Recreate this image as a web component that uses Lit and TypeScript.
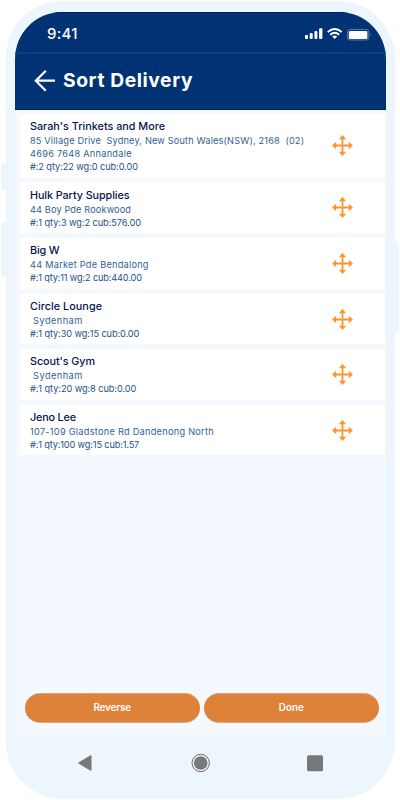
import { LitElement, html, css, svg } from 'lit';
import { customElement, property } from 'lit/decorators.js';

// A single line of text whose tracking is set so that it fills a given width.
@customElement('fit-text')
class FitText extends LitElement {
  @property({ type: Number }) width = 0;
  @property() text = '';
  static styles = css`
    :host { display: block; white-space: pre; }
    span { display: inline-block; white-space: pre; }
  `;
  render() {
    return html`<span>${this.text}</span>`;
  }
  updated() {
    const el = this.renderRoot.querySelector('span') as HTMLElement;
    el.style.letterSpacing = '0px';
    const natural = el.getBoundingClientRect().width;
    const gap = (this.width - natural) / Math.max(1, this.text.length - 1);
    el.style.letterSpacing = `${gap}px`;
  }
}

interface Line { t: string; w: number }
interface Stop { name: Line; address: Line[]; info: Line }

const stops: Stop[] = [
  {
    name: { t: "Sarah's Trinkets and More", w: 135 },
    address: [
      { t: '85 Village Drive  Sydney, New South Wales(NSW), 2168  (02)', w: 274 },
      { t: '4696 7648 Annandale', w: 101.5 },
    ],
    info: { t: '#:2 qty:22 wg:0 cub:0.00', w: 108 },
  },
  {
    name: { t: 'Hulk Party Supplies', w: 99.5 },
    address: [{ t: '44 Boy Pde Rookwood', w: 101 }],
    info: { t: '#:1 qty:3 wg:2 cub:576.00', w: 111 },
  },
  {
    name: { t: 'Big W', w: 29.5 },
    address: [{ t: '44 Market Pde Bendalong', w: 118.5 }],
    info: { t: '#:1 qty:11 wg:2 cub:440.00', w: 112 },
  },
  {
    name: { t: 'Circle Lounge', w: 72 },
    address: [{ t: ' Sydenham', w: 52.3 }],
    info: { t: '#:1 qty:30 wg:15 cub:0.00', w: 109.3 },
  },
  {
    name: { t: "Scout's Gym", w: 65 },
    address: [{ t: ' Sydenham', w: 52.3 }],
    info: { t: '#:1 qty:20 wg:8 cub:0.00', w: 106.3 },
  },
  {
    name: { t: 'Jeno Lee', w: 46 },
    address: [{ t: '107-109 Gladstone Rd Dandenong North', w: 183.7 }],
    info: { t: '#:1 qty:100 wg:15 cub:1.57', w: 109.3 },
  },
];

const arrowHead = svg`<path d="M10.5 0 L14.2 4.2 H11.4 V10.5 H9.6 V4.2 H6.8 Z"/>`;

@customElement('app-root')
class AppRoot extends LitElement {
  static styles = css`
    :host {
      display: block; position: relative; width: 400px; height: 800px;
      overflow: hidden; background: #fff;
      font-family: Inter, "Liberation Sans", sans-serif;
    }
    * { box-sizing: border-box; }
    .side { position: absolute; background: #eef6fd; }
    .mute { left: 1px; top: 163px; width: 7px; height: 27px; border-radius: 3px 0 0 3px; }
    .volume { left: 1px; top: 222px; width: 7px; height: 55px; border-radius: 3px 0 0 3px; }
    .power { left: 394px; top: 241px; width: 5px; height: 92px; border-radius: 0 3px 3px 0; }
    .phone {
      width: 389px; height: 799px; margin-left: 6px;
      border-radius: 57px; background: #eef6fd; padding: 12px 9px 0;
      border-top: 1px solid #fff; display: flex; flex-direction: column; padding-top: 11px;
    }
    .screen {
      height: 724px; width: 371px; background: #f4f9ff; overflow: hidden;
      border-radius: 47px 47px 0 0; display: flex; flex-direction: column; flex: none;
    }
    .status {
      height: 42px; background: #003274; border-top: 1px solid #00205f;
      border-bottom: 2px solid #113d7c; flex: none; display: flex;
      justify-content: space-between; padding: 12px 14px 0 32px;
    }
    .clock { color: #fff; font-size: 15px; font-weight: 500; line-height: 17px; }
    .icons { margin-top: 2px; flex: none; }
    .bar {
      height: 56px; background: #003274; border-bottom: 1px solid #00205f;
      display: flex; align-items: flex-start; padding: 14px 0 0 19px; flex: none;
    }
    .title { color: #fff; font-weight: 700; font-size: 19.3px; line-height: 26px; margin: -1px 0 0 7px; }
    .list { padding: 4px 1px 0 5px; display: flex; flex-direction: column; gap: 4.9px; }
    .card {
      background: #fff; height: 50.7px; padding: 6.2px 31px 0 10px; display: flex;
      justify-content: space-between; flex: none;
    }
    .card.tall { height: 63.6px; padding-top: 6px; }
    .text { width: 280px; flex: none; }
    .name { color: #06164f; font-size: 10.8px; font-weight: 500; line-height: 14px; }
    .line { color: #325f96; font-size: 9.2px; line-height: 13px; }
    .info { color: #1d4f8b; }
    .move { align-self: center; margin: -6px 1px 0 0; flex: none; fill: #fd9430; }
    .buttons { margin-top: auto; padding: 0 7px 13px 9.5px; display: flex; gap: 4px; }
    .btn {
      width: 175.3px; height: 30px; border-radius: 15px; background: #de8139;
      border: 0; border-top: 1px solid #e3a376; border-bottom: 1px solid #e0a67c; padding: 0;
      color: #fff; font: 600 9.8px/28px Inter, sans-serif;
      display: flex; justify-content: center;
    }
    .nav { flex: none; margin-left: 62px; margin-top: 16px; }
  `;

  private line(l: Line, cls: string) {
    return html`<fit-text class=${cls} .text=${l.t} .width=${l.w}></fit-text>`;
  }

  render() {
    return html`
      <div class="side mute"></div>
      <div class="side volume"></div>
      <div class="side power"></div>
      <div class="phone">
        <div class="screen">
          <div class="status">
            <fit-text class="clock" .text=${'9:41'} .width=${30.5}></fit-text>
            <svg class="icons" width="68" height="14" viewBox="304 27 68 14">
              <g fill="#fff">
                <rect x="305" y="35" width="3" height="4" rx="1"/>
                <rect x="309.7" y="33" width="3" height="6" rx="1"/>
                <rect x="314.4" y="31" width="3" height="8" rx="1"/>
                <rect x="319.1" y="28.3" width="3.3" height="10.7" rx="1"/>
                <path d="M334.7 39 L332.2 36.5 Q334.7 34.6 337.2 36.5 Z"/>
                <rect x="348.8" y="31" width="18.6" height="8" rx="1"/>
              </g>
              <g fill="none" stroke="#fff" stroke-width="1.9">
                <path d="M327.8 32 Q334.7 25.8 341.7 32"/>
                <path d="M330.2 34.7 Q334.7 30.7 339.2 34.7"/>
              </g>
              <rect x="347.4" y="29.4" width="21.4" height="10.6" rx="2.4" fill="none" stroke="#5c7aa8"/>
              <path d="M370.3 33 Q371.8 34.7 370.3 36.4 Z" fill="#7c94b8"/>
            </svg>
          </div>
          <div class="bar">
            <svg width="22" height="26" viewBox="34 68 22 26" fill="none" stroke="#fff" stroke-width="2.2">
              <path d="M45.8 70.7 L35.8 80.7 L45.8 90.7 M35.8 80.7 H55"/>
            </svg>
            <fit-text class="title" .text=${'Sort Delivery'} .width=${129.5}></fit-text>
          </div>
          <div class="list">
            ${stops.map(
              (s) => html`
                <div class="card ${s.address.length > 1 ? 'tall' : ''}">
                  <div class="text">
                    ${this.line(s.name, 'name')}
                    ${s.address.map((a) => this.line(a, 'line'))}
                    ${this.line(s.info, 'line info')}
                  </div>
                  <svg class="move" width="21" height="21" viewBox="0 0 21 21">
                    ${[0, 90, 180, 270].map(
                      (r) => svg`<g transform="rotate(${r} 10.5 10.5)">${arrowHead}</g>`
                    )}
                  </svg>
                </div>
              `
            )}
          </div>
          <div class="buttons">
            <button class="btn"><fit-text .text=${'Reverse'} .width=${37.5}></fit-text></button>
            <button class="btn"><fit-text .text=${'Done'} .width=${25}></fit-text></button>
          </div>
        </div>
        <svg class="nav" width="248" height="22" viewBox="77 752 248 22">
          <g fill="#787878">
            <path d="M78.5 763 L91 755.5 V770.5 Z" stroke="#787878" stroke-linejoin="round"/>
            <circle cx="200.7" cy="763" r="6.8"/>
            <rect x="307" y="755.2" width="16" height="16" rx="1.5"/>
          </g>
          <circle cx="200.7" cy="763" r="8.7" fill="none" stroke="#686b6e" stroke-width="1"/>
        </svg>
      </div>
    `;
  }
}
